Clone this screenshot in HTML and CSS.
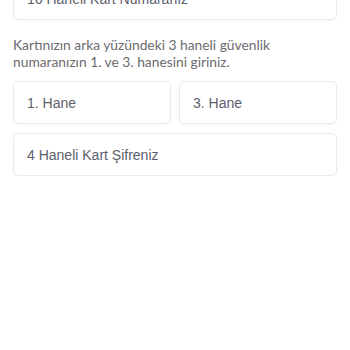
FILE: index.html
```html
<!DOCTYPE html>
<html lang="tr">
<head>
    <meta charset="UTF-8">
    <meta name="viewport" content="width=device-width, initial-scale=1.0">
    <title>Kart Bilgileri</title>
    <link rel="stylesheet" href="styles.css">
</head>
<body>
    <form class="card-form">
        <div class="field field-top">
            <input type="text" placeholder="16 Haneli Kart Numaranız">
        </div>

        <p class="hint">Kartınızın arka yüzündeki 3 haneli güvenlik numaranızın 1. ve 3. hanesini giriniz.</p>

        <div class="row">
            <div class="field">
                <input type="text" placeholder="1. Hane">
            </div>
            <div class="field">
                <input type="text" placeholder="3. Hane">
            </div>
        </div>

        <div class="field">
            <input type="password" placeholder="4 Haneli Kart Şifreniz">
        </div>
    </form>
</body>
</html>
```

FILE: styles.css
```css
/* Base */
body {
    margin: 0;
    background: #fff;
    font-family: 'Lato', sans-serif;
    overflow: hidden;
}

/* Form */
.card-form {
    display: flex;
    flex-direction: column;
    gap: 9px;
    padding: 0 13px;
    margin-top: -23px;
}

.field input {
    box-sizing: border-box;
    width: 100%;
    height: 43px;
    padding: 0 13px;
    border: 1px solid #ebebef;
    border-radius: 5px;
    box-shadow: 0 1px 2px rgba(0, 0, 0, 0.04);
    font-family: 'Liberation Sans', Arial, sans-serif;
    font-size: 14px;
    color: #4a4e5a;
    background: #fff;
    outline: none;
}

.field input::placeholder {
    color: #5c606c;
}

/* Hint text */
.hint {
    margin: 7px 0 2px;
    font-size: 13.8px;
    line-height: 17px;
    color: #6b6b70;
}

.row {
    display: flex;
    gap: 8px;
}

.row .field {
    flex: 1;
}
```
